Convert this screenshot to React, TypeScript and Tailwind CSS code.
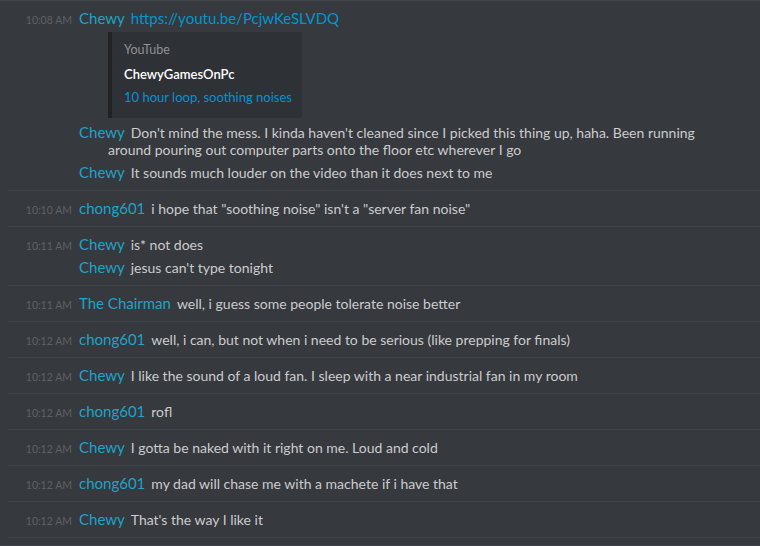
type Msg = {
  name: string;
  text: string;
  link?: boolean;
};

type Group = {
  time: string;
  messages: Msg[];
  embed?: boolean;
};

const groups: Group[] = [
  {
    time: "10:08 AM",
    embed: true,
    messages: [
      { name: "Chewy", text: "https://youtu.be/PcjwKeSLVDQ", link: true },
      {
        name: "Chewy",
        text: "Don't mind the mess. I kinda haven't cleaned since I picked this thing up, haha. Been running around pouring out computer parts onto the floor etc wherever I go",
      },
      { name: "Chewy", text: "It sounds much louder on the video than it does next to me" },
    ],
  },
  {
    time: "10:10 AM",
    messages: [{ name: "chong601", text: 'i hope that "soothing noise" isn\'t a "server fan noise"' }],
  },
  {
    time: "10:11 AM",
    messages: [
      { name: "Chewy", text: "is* not does" },
      { name: "Chewy", text: "jesus can't type tonight" },
    ],
  },
  {
    time: "10:11 AM",
    messages: [{ name: "The Chairman", text: "well, i guess some people tolerate noise better" }],
  },
  {
    time: "10:12 AM",
    messages: [{ name: "chong601", text: "well, i can, but not when i need to be serious (like prepping for finals)" }],
  },
  {
    time: "10:12 AM",
    messages: [{ name: "Chewy", text: "I like the sound of a loud fan. I sleep with a near industrial fan in my room" }],
  },
  { time: "10:12 AM", messages: [{ name: "chong601", text: "rofl" }] },
  { time: "10:12 AM", messages: [{ name: "Chewy", text: "I gotta be naked with it right on me. Loud and cold" }] },
  { time: "10:12 AM", messages: [{ name: "chong601", text: "my dad will chase me with a machete if i have that" }] },
  { time: "10:12 AM", messages: [{ name: "Chewy", text: "That's the way I like it" }] },
];

const Embed = () => (
  <div className="indent-0 mt-[5px] w-fit border-l-4 border-[#202225] bg-[#2e3136] rounded-r-[3px] pl-[12px] pr-[10px] pt-[10px] pb-[12px]">
    <div className="text-[12.5px] leading-[16px] text-[#8e9297]">YouTube</div>
    <div className="mt-[7px] text-[13px] leading-[18px] font-semibold text-white">ChewyGamesOnPc</div>
    <div className="mt-[5px] text-[13px] leading-[18px] text-[#0096cf]">10 hour loop, soothing noises</div>
  </div>
);

export default function App() {
  return (
    <div
      className="h-[546px] w-[760px] overflow-hidden bg-[#36393e] border-t border-b border-[#41444a] flex flex-col"
      style={{ fontFamily: "Lato, 'Open Sans', sans-serif" }}
    >
      {groups.map((g, gi) => (
        <div
          key={gi}
          className={gi === 0 ? "pt-[6px] pb-[6px]" : "ml-[8px] border-t border-[#3f4248] pt-[6px] pb-[6px]"}
        >
          {g.messages.map((m, mi) => (
            <div
              key={mi}
              className={
                "py-[3px] pr-[30px] text-[15px] leading-[17px] text-[#cbcccd] -indent-[29px] " +
                (gi === 0 ? "pl-[108px]" : "pl-[100px]")
              }
            >
              {mi === 0 && (
                <span className="relative top-[1.5px] inline-block align-top indent-0 w-[64px] -ml-[71px] mr-[7px] text-right text-[10.5px] leading-[17px] text-[#5e6166]">
                  {g.time}
                </span>
              )}
              <span className="text-[#1fa3c9] mr-[6px] leading-[0]">{m.name}</span>
              <span className={"text-[14px] leading-[0] " + (m.link ? "text-[15px] text-[#0096cf]" : "")}>
                {m.text}
              </span>
              {mi === 0 && g.embed && <Embed />}
            </div>
          ))}
        </div>
      ))}
      <div className="ml-[8px] flex-1 border-t border-[#3f4248]" />
    </div>
  );
}
